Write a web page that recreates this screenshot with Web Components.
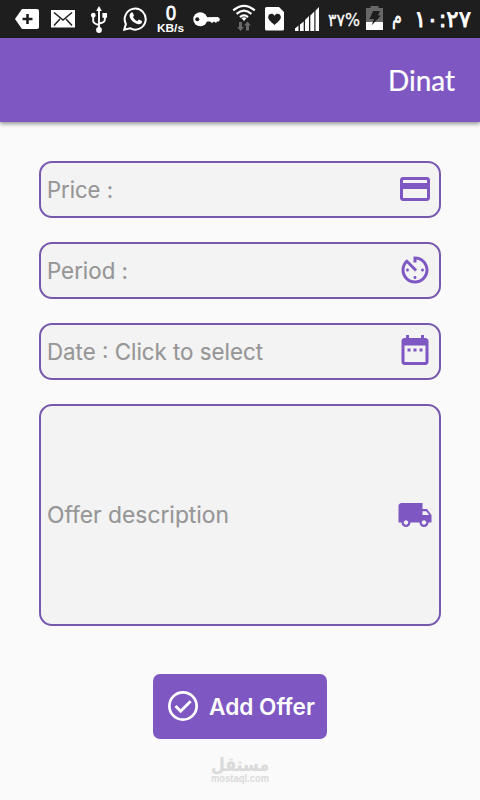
<!DOCTYPE html>
<html lang="en"><head><meta charset="utf-8"><title>Dinat</title>
<style>html,body{margin:0;background:#fafafa}body{width:480px;height:800px;overflow:hidden}</style></head>
<body><offer-app></offer-app>
<script>
const define=(name,html)=>customElements.define(name,class extends HTMLElement{
  connectedCallback(){
    if(this.shadowRoot)return;
    const root=this.attachShadow({mode:'open'});
    const t=document.createElement('template');
    t.innerHTML=typeof html==='function'?html(this):html;
    root.append(t.content.cloneNode(true));
  }
});

// One line of text set to an exact width; base is the baseline within the box.
define('fit-text',e=>{
  const a=n=>e.getAttribute(n);
  return `<style>:host{display:block;flex:none;width:${a('w')}px;height:${a('h')}px}svg{display:block;overflow:visible}</style>
  <svg width="${a('w')}" height="${a('h')}"><text x="0" y="${a('base')}" textLength="${a('w')}" lengthAdjust="spacingAndGlyphs" fill="currentColor" stroke="currentColor" stroke-linejoin="round" stroke-width="${a('ink')||0}">${e.textContent}</text></svg>`;
});

const glyphs={
card:'<path d="M20 4H4c-1.11 0-1.99.89-1.99 2L2 18c0 1.11.89 2 2 2h16c1.11 0 2-.89 2-2V6c0-1.11-.89-2-2-2zm0 14H4v-6h16v6zm0-10H4V6h16v2z"/>',
timer:'<path d="M11 17c0 .55.45 1 1 1s1-.45 1-1-.45-1-1-1-1 .45-1 1zm0-14v4h2V5.08c3.39.49 6 3.39 6 6.92 0 3.87-3.13 7-7 7s-7-3.13-7-7c0-1.68.59-3.22 1.58-4.42L12 13l1.41-1.41-6.8-6.8v.02C4.42 6.45 3 9.05 3 12c0 4.97 4.02 9 9 9 4.97 0 9-4.03 9-9s-4.03-9-9-9h-1zm7 9c0-.55-.45-1-1-1s-1 .45-1 1 .45 1 1 1 1-.45 1-1zM6 12c0 .55.45 1 1 1s1-.45 1-1-.45-1-1-1-1 .45-1 1z"/>',
date:'<path d="M9 11H7v2h2v-2zm4 0h-2v2h2v-2zm4 0h-2v2h2v-2zm2-7h-1V2h-2v2H8V2H6v2H5c-1.11 0-1.99.9-1.99 2L3 20c0 1.1.89 2 2 2h14c1.1 0 2-.9 2-2V6c0-1.1-.9-2-2-2zm0 16H5V9h14v11z"/>',
truck:'<path d="M20 8h-3V4H3c-1.1 0-2 .9-2 2v11h2c0 1.66 1.34 3 3 3s3-1.34 3-3h6c0 1.66 1.34 3 3 3s3-1.34 3-3h2v-5l-3-4zM6 18.500c-.83 0-1.500-.67-1.500-1.500s.67-1.500 1.500-1.500 1.500.67 1.500 1.500-.67 1.500-1.500 1.500zm13.500-9l1.960 2.500H17V9.500h2.500zm-1.500 9c-.83 0-1.500-.67-1.500-1.500s.67-1.500 1.500-1.500 1.500.67 1.500 1.500-.67 1.500-1.500 1.500z"/>',
check:'<circle cx="12" cy="12" r="9.100" fill="none" stroke="currentColor" stroke-width="1.800"/><path d="M7 12l3.400 3.500 6.700-6.700" fill="none" stroke="currentColor" stroke-width="1.900"/>'
};
define('app-icon',e=>`<style>:host{display:block;flex:none;width:36px;height:36px}svg{display:block}</style><svg width="36" height="36" viewBox="0 0 24 24" fill="currentColor">${glyphs[e.getAttribute('name')]}</svg>`);

// Status bar symbols: [width, drawing], each 38px tall.
const status={
add:[24,'<path d="M7 9h15q2 0 2 2v16q0 2-2 2H7L0 19z" fill="#fff"/><path d="M12.500 14v10M7.500 19h10" stroke="#1e1e1e" stroke-width="2.600"/>'],
mail:[24,'<path d="M0 10h24v17.500H0z" fill="#fff"/><path d="M3 12.500L12 20l9-7.500M3 25.500l6-6.500M21 25.500l-6-6.500" fill="none" stroke="#1e1e1e" stroke-width="1.500"/>'],
usb:[16,'<path d="M8 10v19M2.200 17v4q0 2.500 5.800 4M13.800 16v4q0 2.500-5.800 3.500" fill="none" stroke="#fff" stroke-width="1.900"/><path d="M8 6l2.800 5H5.200zM11.400 13h4.700v4.700h-4.700z" fill="#fff"/><circle cx="2.300" cy="15.200" r="2.400" fill="#fff"/><circle cx="8" cy="30" r="2.900" fill="#fff"/>'],
chat:[24,'<path d="M1.200 29.600l1.700-5.600a10.500 10.500 0 1 1 4 4.200z" fill="none" stroke="#fff" stroke-width="2"/><path d="M8 12.800c.8-.8 1.500-.7 1.900.1l1 2.300c.2.600-.8 1.500-.9 1.900.8 1.900 2.500 3.500 4.300 4.100l1.500-1.700 3.200 1.500c.4 2.300-1.600 3.600-3.700 3.300C11 23.900 6.300 18.800 6.600 15.600c0-1.200.6-2.100 1.400-2.800z" fill="#fff"/>'],
key:[27,'<path d="M10 17.200l15-.1 2 1.800-1 2.500h-2l-1 1.500-2-1.500-2 1.500-2-1.500H11z" fill="#fff"/><circle cx="7.300" cy="19.200" r="7" fill="#fff"/><circle cx="4.300" cy="19.200" r="2" fill="#1e1e1e"/>'],
wifi:[24,'<g fill="none" stroke="#fff" stroke-width="2.200"><path d="M1.200 10.400q10.800-9.200 21.600 0M4.600 13.900q7.400-6.400 14.800 0M8 17.100q4-3.400 8 0"/></g><path d="M9.500 18.200q2.500-2 5 0L12 21z" fill="#fff"/><path d="M7 22h3v5h2l-3.500 4L5 27h2zM14 30.500h3v-5h2l-3.500-4-3.500 4h2z" fill="#696969"/>'],
heart:[19,'<path d="M1.500 7H14l5 5v17q0 1.500-1.500 1.500h-16Q0 30.500 0 29V8.500Q0 7 1.500 7z" fill="#fff"/><path d="M9.500 25C5 21 3.200 19.500 3.200 17c0-3.800 4.800-4.500 6.300-1.300 1.500-3.200 6.300-2.500 6.300 1.300 0 2.500-1.800 4-6.300 8z" fill="#1e1e1e"/>'],
signal:[24,'<path d="M0 28.500l3.500-3V31H0zM5 24.500l3.700-3V31H5zM10 20l4-4v15h-4zM15.300 15.500l4-4V31h-4zM20.500 10.500L24 7v24h-3.500z" fill="#fff"/>'],
battery:[17,'<path d="M0 8h4.500V6h8v2H17v14H0z" fill="#686868"/><path d="M0 22h17v8H0z" fill="#fff"/><path d="M7 11h7l-2 4.500h3L5.500 25.500 8 19H3.500z" fill="#1e1e1e"/>']
};
define('status-icon',e=>{const [w,s]=status[e.getAttribute('name')];return `<style>:host{display:block;flex:none;width:${w}px;height:38px}svg{display:block}</style><svg width="${w}" height="38">${s}</svg>`});

define('status-bar',`<style>
:host{display:flex;height:38px;padding-left:15px;box-sizing:border-box;background:#1e1e1e;color:#fff;align-items:flex-start}
.mail{margin-left:12px}.usb{margin-left:16px}.chat{margin-left:16px}
.rate{margin-left:10px;width:27px;display:flex;flex-direction:column;align-items:center;font-family:"Liberation Sans",sans-serif}
.num{font-size:20px}.unit{font-size:11px;font-weight:bold}
.key,.heart{margin-left:9px}.wifi{margin-left:12px}.signal{margin-left:11px}
.pct{margin-left:9px;font:17px "DejaVu Sans",sans-serif}.battery{margin-left:6px}
.pm{margin-left:9px;font:22px "DejaVu Sans",sans-serif}.time{margin-left:12px;font:23px "DejaVu Sans",sans-serif}
</style><status-icon name="add"></status-icon><status-icon class="mail" name="mail"></status-icon><status-icon class="usb" name="usb"></status-icon><status-icon class="chat" name="chat"></status-icon>
<div class="rate"><fit-text class="num" w="10" h="22" base="20" ink=".8">0</fit-text><fit-text class="unit" w="27" h="14" base="10">KB/s</fit-text></div>
<status-icon class="key" name="key"></status-icon><status-icon class="wifi" name="wifi"></status-icon><status-icon class="heart" name="heart"></status-icon><status-icon class="signal" name="signal"></status-icon>
<fit-text class="pct" w="32" h="38" base="26" ink=".3">٣٧%</fit-text><status-icon class="battery" name="battery"></status-icon>
<fit-text class="pm" w="10" h="38" base="24" ink=".5">م</fit-text><fit-text class="time" w="57" h="38" base="27" ink=".8">١٠:٢٧</fit-text>`);

define('app-header',`<style>:host{display:flex;justify-content:flex-end;height:84px;padding:24px 25px 0 0;box-sizing:border-box;background:#7e57c2;color:#fff;box-shadow:0 2px 4px rgba(0,0,0,.4);font:28px Lato,sans-serif}</style><fit-text w="67" h="36" base="29" ink=".2">Dinat</fit-text>`);

define('offer-field',`<style>:host{display:flex;align-items:center;justify-content:space-between;box-sizing:border-box;height:57px;padding:0 6px 2px 6px;border:2px solid #7659ad;border-radius:13px;background:#f3f3f3;color:#969696;font:22.500px Inter,"Liberation Sans",sans-serif}
:host([raised]){padding-bottom:4px}:host([large]){height:222px;padding-bottom:0}::slotted(app-icon){color:#7e57c2}</style><slot></slot><slot name="icon"></slot>`);

define('offer-button',`<style>:host{display:flex;align-items:center;box-sizing:border-box;width:174px;height:65px;padding:0 0 1px 12px;gap:8px;border-radius:7px;background:#7e57c2;color:#fff;font:600 22.500px Inter,"Liberation Sans",sans-serif}</style><slot></slot>`);

define('site-mark',`<style>:host{display:flex;flex-direction:column;align-items:center;color:#dadada}
.ar{font:bold 19px "DejaVu Sans",sans-serif}.en{font:bold 10px "Liberation Sans",sans-serif}</style>
<fit-text class="ar" w="58" h="19" base="16" ink=".2">مستقل</fit-text><fit-text class="en" w="58" h="12" base="8">mostaql.com</fit-text>`);

define('offer-app',`<style>:host{display:flex;flex-direction:column;width:480px;height:800px;background:#fafafa}
main{display:flex;flex-direction:column;gap:24px;padding:39px 39px 0}
offer-button{margin:24px auto 0}site-mark{margin-top:16px}</style>
<status-bar></status-bar><app-header></app-header>
<main>
<offer-field><fit-text w="66" h="36" base="27" ink=".15">Price :</fit-text><app-icon slot="icon" name="card"></app-icon></offer-field>
<offer-field><fit-text w="81" h="36" base="27" ink=".15">Period :</fit-text><app-icon slot="icon" name="timer"></app-icon></offer-field>
<offer-field raised><fit-text w="216" h="36" base="28" ink=".15">Date : Click to select</fit-text><app-icon slot="icon" name="date"></app-icon></offer-field>
<offer-field large><fit-text w="182" h="36" base="26" ink=".15">Offer description</fit-text><app-icon slot="icon" name="truck"></app-icon></offer-field>
<offer-button><app-icon name="check"></app-icon><fit-text w="106" h="36" base="27">Add Offer</fit-text></offer-button>
</main><site-mark></site-mark>`);
</script></body></html>
